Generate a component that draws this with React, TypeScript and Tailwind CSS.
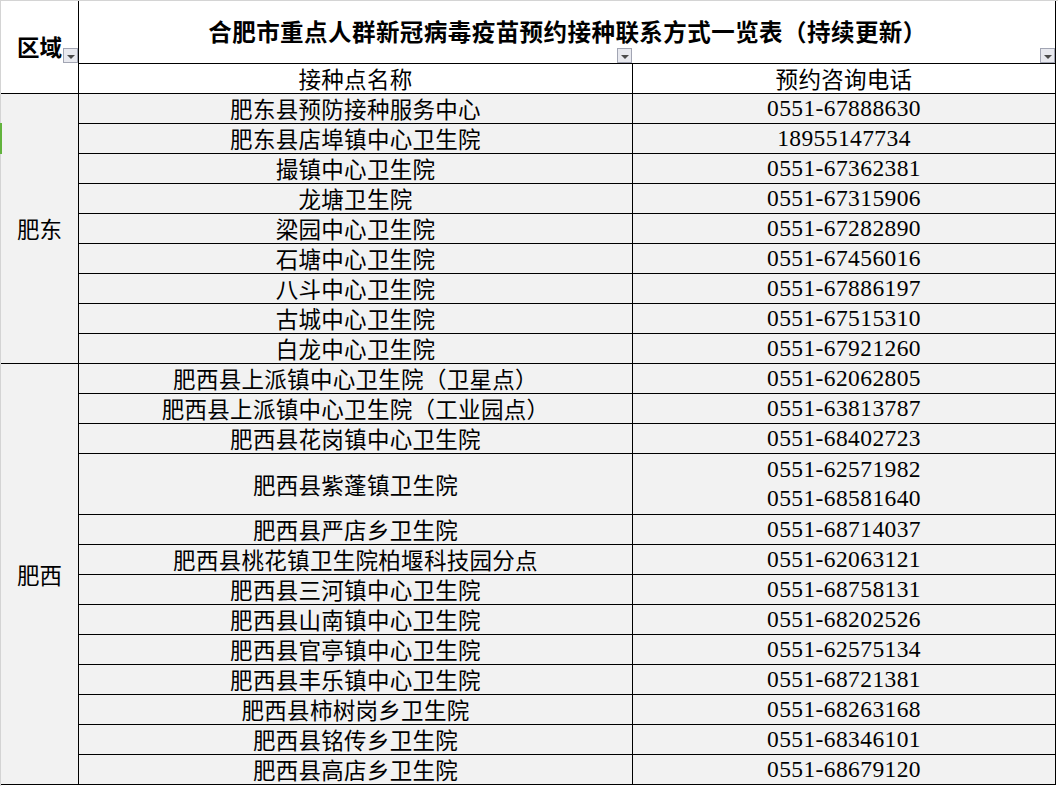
import React from "react";

const feidong: [string, string[]][] = [
  ["肥东县预防接种服务中心", ["0551-67888630"]],
  ["肥东县店埠镇中心卫生院", ["18955147734"]],
  ["撮镇中心卫生院", ["0551-67362381"]],
  ["龙塘卫生院", ["0551-67315906"]],
  ["梁园中心卫生院", ["0551-67282890"]],
  ["石塘中心卫生院", ["0551-67456016"]],
  ["八斗中心卫生院", ["0551-67886197"]],
  ["古城中心卫生院", ["0551-67515310"]],
  ["白龙中心卫生院", ["0551-67921260"]],
];

const feixi: [string, string[]][] = [
  ["肥西县上派镇中心卫生院（卫星点）", ["0551-62062805"]],
  ["肥西县上派镇中心卫生院（工业园点）", ["0551-63813787"]],
  ["肥西县花岗镇中心卫生院", ["0551-68402723"]],
  ["肥西县紫蓬镇卫生院", ["0551-62571982", "0551-68581640"]],
  ["肥西县严店乡卫生院", ["0551-68714037"]],
  ["肥西县桃花镇卫生院柏堰科技园分点", ["0551-62063121"]],
  ["肥西县三河镇中心卫生院", ["0551-68758131"]],
  ["肥西县山南镇中心卫生院", ["0551-68202526"]],
  ["肥西县官亭镇中心卫生院", ["0551-62575134"]],
  ["肥西县丰乐镇中心卫生院", ["0551-68721381"]],
  ["肥西县柿树岗乡卫生院", ["0551-68263168"]],
  ["肥西县铭传乡卫生院", ["0551-68346101"]],
  ["肥西县高店乡卫生院", ["0551-68679120"]],
];

function FilterButton({ className }: { className: string }) {
  return (
    <span
      className={`absolute w-[15px] h-[15px] border border-[#a2a5b3] bg-[#e8e9ef] flex items-center justify-center ${className}`}
    >
      <span className="mt-[2px] w-0 h-0 border-l-[4px] border-r-[4px] border-t-[4px] border-l-transparent border-r-transparent border-t-[#4b4b4b]" />
    </span>
  );
}

function Rows({ data }: { data: [string, string[]][] }) {
  return (
    <>
      {data.map(([name, phones]) => (
        <React.Fragment key={name}>
          <div className="bg-[#f2f2f2] flex items-center justify-center text-[22.5px] tracking-[0.3px] leading-none">
            {name}
          </div>
          <div className="bg-[#f2f2f2] flex flex-col items-center justify-center gap-[5px] font-['Liberation_Serif',serif] text-[23.5px] tracking-[0.4px] leading-none">
            {phones.map((p) => (
              <span key={p}>{p}</span>
            ))}
          </div>
        </React.Fragment>
      ))}
    </>
  );
}

export default function App() {
  return (
    <div className="relative w-[1058px] h-[786px] bg-white border-t border-l border-[#d4d4d4] text-black font-['Noto_Sans_CJK_SC',sans-serif]">
      <span className="absolute left-[-1px] top-[122px] w-[2px] h-[31px] bg-[#62b33d]" />
      <div className="grid w-fit grid-cols-[77px_553px_422px] grid-rows-[62px_29px_repeat(12,29px)_60px_repeat(9,29px)] gap-px bg-black border-r border-b border-black">
        <div className="relative row-span-2 bg-white flex items-center justify-center pb-[2px] text-[22.5px] font-bold leading-none">
          区域
          <FilterButton className="left-[62px] top-[47px]" />
        </div>
        <div className="relative col-span-2 bg-white flex items-center justify-center pl-[1px] text-[23.5px] tracking-[0.45px] font-bold leading-none">
          合肥市重点人群新冠病毒疫苗预约接种联系方式一览表（持续更新）
          <FilterButton className="left-[538px] bottom-0" />
          <FilterButton className="right-0 bottom-0" />
        </div>
        <div className="bg-white flex items-center justify-center text-[22.5px] tracking-[0.3px] leading-none">
          接种点名称
        </div>
        <div className="bg-white flex items-center justify-center text-[22.5px] tracking-[0.3px] leading-none">
          预约咨询电话
        </div>
        <div className="row-span-9 bg-[#f2f2f2] flex items-center justify-center text-[22.5px] leading-none">
          肥东
        </div>
        <Rows data={feidong} />
        <div className="row-span-13 bg-[#f2f2f2] flex items-center justify-center text-[22.5px] leading-none">
          肥西
        </div>
        <Rows data={feixi} />
      </div>
    </div>
  );
}
